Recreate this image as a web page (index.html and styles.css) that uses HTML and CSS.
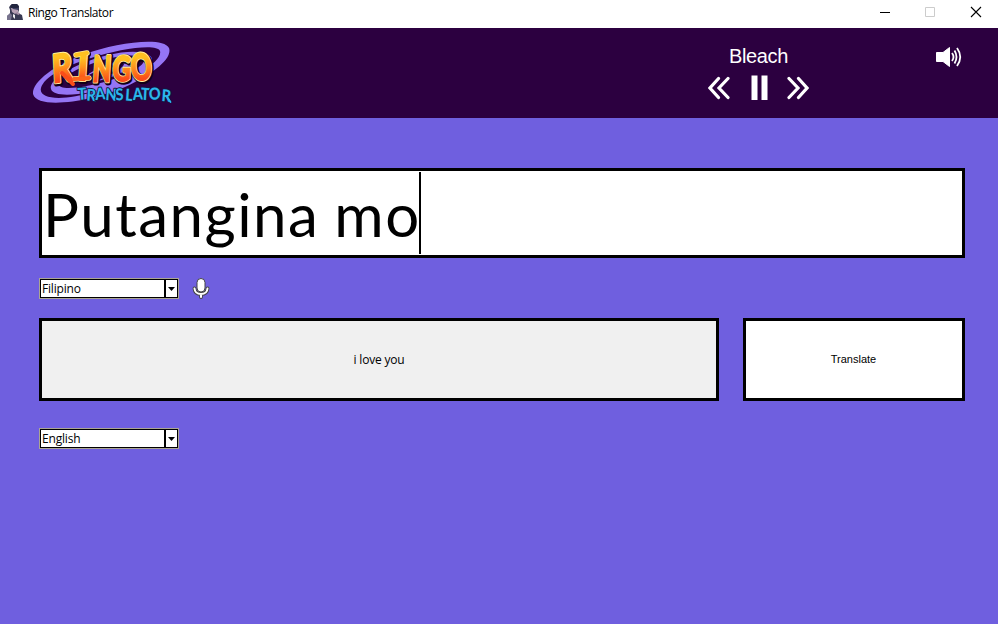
FILE: index.html
```html
<!DOCTYPE html>
<html lang="en">
<head>
<meta charset="utf-8">
<title>Ringo Translator</title>
<link rel="stylesheet" href="styles.css">
</head>
<body>
<div class="titlebar">
  <svg class="app-icon" width="16" height="16" viewBox="0 0 16 16">
    <path d="M0 16V12L3 10L3 6L2 3L5 0H10L12 2V6L11 9L15 11L16 16Z" fill="#383952"/>
    <path d="M3 2L5 0H10L12 3L10 4H4Z" fill="#22263f"/>
    <path d="M4 4H11V8L8 10L5 8Z" fill="#b6a0b4"/>
    <path d="M5 4H12L11 6L6 5Z" fill="#3d4063"/>
    <path d="M0 12L3 9L5 11L4 16H0Z" fill="#77738d"/>
    <path d="M6 10L8 11L8 15L6 13Z" fill="#eee"/>
    <path d="M10 8L13 9L12 11L9 10Z" fill="#a891a7"/>
  </svg>
  <span class="title">Ringo Translator</span>
  <div class="window-controls">
    <svg width="46" height="28" viewBox="0 0 46 28"><path d="M18 12.5H28" stroke="#000"/></svg>
    <svg width="46" height="28" viewBox="0 0 46 28"><path d="M17.5 7.5H26.5V16.5H17.5Z" stroke="#ccc" fill="none"/></svg>
    <svg width="46" height="28" viewBox="0 0 46 28"><path d="M17 7L27 17M27 7L17 17" stroke="#000" stroke-width="1.1"/></svg>
  </div>
</div>
<header class="header">
  <svg class="logo" width="155" height="76" viewBox="25 34 155 76">
    <defs>
      <linearGradient id="fire" x1="0" y1="0" x2="0" y2="1">
        <stop offset=".3" stop-color="#ffc020"/><stop offset=".5" stop-color="#ff961c"/><stop offset=".78" stop-color="#fa4d19"/>
      </linearGradient>
    </defs>
    <g fill="#9575f5">
      <path fill-rule="evenodd" d="M33 94C32 82 54 65 85 54C115 43 163 36 169 48C173 59 151 75 125 87C96 100 38 111 33 94ZM41 88C38 99 62 102 96 91C131 80 163 62 160 51C157 43 119 49 91 58C65 66 44 77 41 88Z"/>
      <path fill-rule="evenodd" d="M51 89C48 79 78 62 108 55C132 49 154 51 152 61C150 73 121 86 91 92C70 96 53 96 51 89ZM59 84C58 91 84 88 108 81C132 73 148 64 143 58C137 53 112 56 91 64C74 70 60 78 59 84Z"/>
      <path d="M84 77C99 66 120 58 135 60C133 69 113 78 94 82C109 76 123 69 124 64C114 63 99 70 84 77Z"/>
    </g>
    <g class="logo-main">
      <g class="logo-shadow">
        <text transform="translate(54 84) rotate(-8) skewX(-5) scale(.76 .94)">R</text>
        <text transform="translate(78 81) rotate(4) scale(.82 .84)">I</text>
        <text transform="translate(93 83) rotate(-1) skewX(-5) scale(.58 .88)">N</text>
        <text transform="translate(113 82) skewX(-3) scale(.62 .84)">G</text>
        <text transform="translate(133 82) rotate(-5) scale(.63 .9)">O</text>
        <path d="M77 56L88 54M75 80L90 79"/>
      </g>
      <g class="logo-edge">
        <text transform="translate(53 83) rotate(-8) skewX(-5) scale(.76 .94)">R</text>
        <text transform="translate(77 80) rotate(4) scale(.82 .84)">I</text>
        <text transform="translate(92 82) rotate(-1) skewX(-5) scale(.58 .88)">N</text>
        <text transform="translate(112 81) skewX(-3) scale(.62 .84)">G</text>
        <text transform="translate(132 81) rotate(-5) scale(.63 .9)">O</text>
        <path d="M76 55L87 53M74 79L89 78"/>
      </g>
      <g class="logo-face">
        <text transform="translate(53 83) rotate(-8) skewX(-5) scale(.76 .94)">R</text>
        <text transform="translate(77 80) rotate(4) scale(.82 .84)">I</text>
        <text transform="translate(92 82) rotate(-1) skewX(-5) scale(.58 .88)">N</text>
        <text transform="translate(112 81) skewX(-3) scale(.62 .84)">G</text>
        <text transform="translate(132 81) rotate(-5) scale(.63 .9)">O</text>
      </g>
      <path d="M76 55L87 53" stroke="#ffc020" stroke-width="4"/>
      <path d="M74 79L89 78" stroke="#fb651a" stroke-width="4"/>
      <path d="M62 73L73 84" stroke="#fa4d19" stroke-width="4"/>
    </g>
    <text class="logo-sub" transform="translate(78 0) scale(.88 1)" x="0 9.500 20 31 43 53.500 62.500 71 81 94.500" y="100 100.500 100 100 100.500 100.500 100 99.500 100 101" rotate="-4 4 -4 4 -3 4 -3 4 -4 5">TRANSLATOR</text>
    <path d="M167 97L170.500 102" stroke="#2cb5ec" stroke-width="1.8" stroke-linecap="round"/>
  </svg>
  <div class="player">
    <div class="song">Bleach</div>
    <div class="controls">
      <svg width="22" height="26" viewBox="0 0 22 26"><path d="M10.500 3.500L2 13L10.500 22.500M20 3.500L11 13L20 22.500"/></svg>
      <svg width="18" height="26" viewBox="0 0 18 26"><path class="bars" d="M1.500 .5H7.500V25H1.500ZM11.500 .5H17.500V25H11.500Z"/></svg>
      <svg width="22" height="26" viewBox="0 0 22 26"><path d="M11.500 3.500L20 13L11.500 22.500M2 3.500L11 13L2 22.500"/></svg>
    </div>
  </div>
  <svg class="speaker" width="27" height="20" viewBox="0 0 27 20">
    <path d="M.5 5.500H7L13.500 .5V19.500L7 14.500H.5Z" fill="#fff" stroke="#fff" stroke-linejoin="round"/>
    <path d="M16 6Q19 10 16 14M18.500 3.500Q22.500 10 18.500 16.500M21 1Q27.500 10 21 19" fill="none" stroke="#fff" stroke-width="1.8"/>
  </svg>
</header>
<main class="main">
  <div class="source"><span class="source-text">Putangina mo</span><span class="caret"></span></div>
  <div class="source-tools">
    <div class="combo"><span class="value">Filipino</span><span class="arrow"><svg width="7" height="4" viewBox="0 0 7 4"><path d="M0 0H7L3.5 4Z"/></svg></span></div>
    <svg class="mic" width="18" height="22" viewBox="0 0 18 22">
      <g fill="none" stroke-linecap="round"><path d="M2.500 10.500Q3 16 9 16Q15 16 15.500 10.500M9 16V19" stroke="#454545" stroke-width="3.8"/><path d="M2.500 10.500Q3 16 9 16Q15 16 15.500 10.500M9 16V19" stroke="#fff" stroke-width="2"/></g>
      <rect x="5" y=".5" width="8" height="13.500" rx="4" fill="#fff" stroke="#454545"/>
    </svg>
  </div>
  <div class="output-row">
    <div class="output">i love you</div>
    <div class="translate">Translate</div>
  </div>
  <div class="combo"><span class="value">English</span><span class="arrow"><svg width="7" height="4" viewBox="0 0 7 4"><path d="M0 0H7L3.5 4Z"/></svg></span></div>
</main>
</body>
</html>
```
FILE: styles.css
```css
* { box-sizing: border-box; }
body { margin: 0; width: 998px; height: 624px; overflow: hidden; background: #6f5fdf; color: #000; font-family: "Open Sans", "Noto Sans", sans-serif; }
svg { display: block; flex: none; }
.titlebar { height: 28px; background: #fff; display: flex; padding-left: 7px; }
.app-icon { margin-top: 4px; }
.title { margin-left: 5px; font-size: 12px; line-height: 26px; letter-spacing: -.43px; }
.window-controls { margin-left: auto; display: flex; margin-right: -2px; }
.header { height: 90px; background: #2c0040; display: flex; padding: 6px 35px 0 25px; }
.player { width: 101px; margin-left: 528px; color: #fff; }
.song { margin-top: 11px; text-align: center; font: 20px/22px "Liberation Sans", Arial, sans-serif; letter-spacing: -.35px; }
.controls { display: flex; justify-content: space-between; margin-top: 8px; }
.controls path { fill: none; stroke: #fff; stroke-width: 3.2; stroke-linecap: round; }
.controls .bars { fill: #fff; stroke: none; }
.speaker { margin: 13px 0 0 auto; }
.logo-main { font: 900 41px "Lato", sans-serif; stroke-linejoin: round; stroke-linecap: round; }
.logo-face { fill: url(#fire); stroke: url(#fire); stroke-width: 1.5; }
.logo-edge { fill: #fff0a0; stroke: #fff0a0; stroke-width: 3.5; }
.logo-edge path { stroke-width: 5.5; }
.logo-shadow { fill: #120018; stroke: #120018; stroke-width: 6; }
.logo-sub { font: 900 16.5px "Lato", sans-serif; fill: #2cb5ec; stroke: #16153f; stroke-width: 2px; stroke-linejoin: round; paint-order: stroke; }
.main { padding: 50px 33px 0 39px; }
.source { height: 90px; border: 3px solid #000; background: #fff; display: flex; padding: 1px 0 0 1px; }
.source-text { width: 376px; font: 60px/84px "Lato", sans-serif; letter-spacing: 1.5px; word-spacing: -2px; white-space: nowrap; }
.caret { width: 2px; height: 82px; background: #000; }
.source-tools { display: flex; margin-top: 20px; height: 40px; }
.combo { display: flex; width: 140px; height: 21px; padding: 1px; background: #000; border: 1px solid #aaa593; gap: 2px; font-size: 12px; line-height: 17px; }
.combo .value { flex: 1; background: #fff; padding-left: 1px; letter-spacing: -.18px; }
.combo .arrow { width: 11px; background: #fff; display: grid; place-items: center; }
.mic { margin-left: 13px; }
.output-row { display: flex; gap: 24px; height: 83px; margin-bottom: 27px; }
.output, .translate { border: 3px solid #000; display: flex; align-items: center; justify-content: center; }
.output { width: 680px; background: #f0f0f0; font-size: 12px; letter-spacing: -.2px; }
.translate { flex: 1; background: #fff; font: 11px "Liberation Sans", Arial, sans-serif; padding: 0 1px 2px 0; }
```
